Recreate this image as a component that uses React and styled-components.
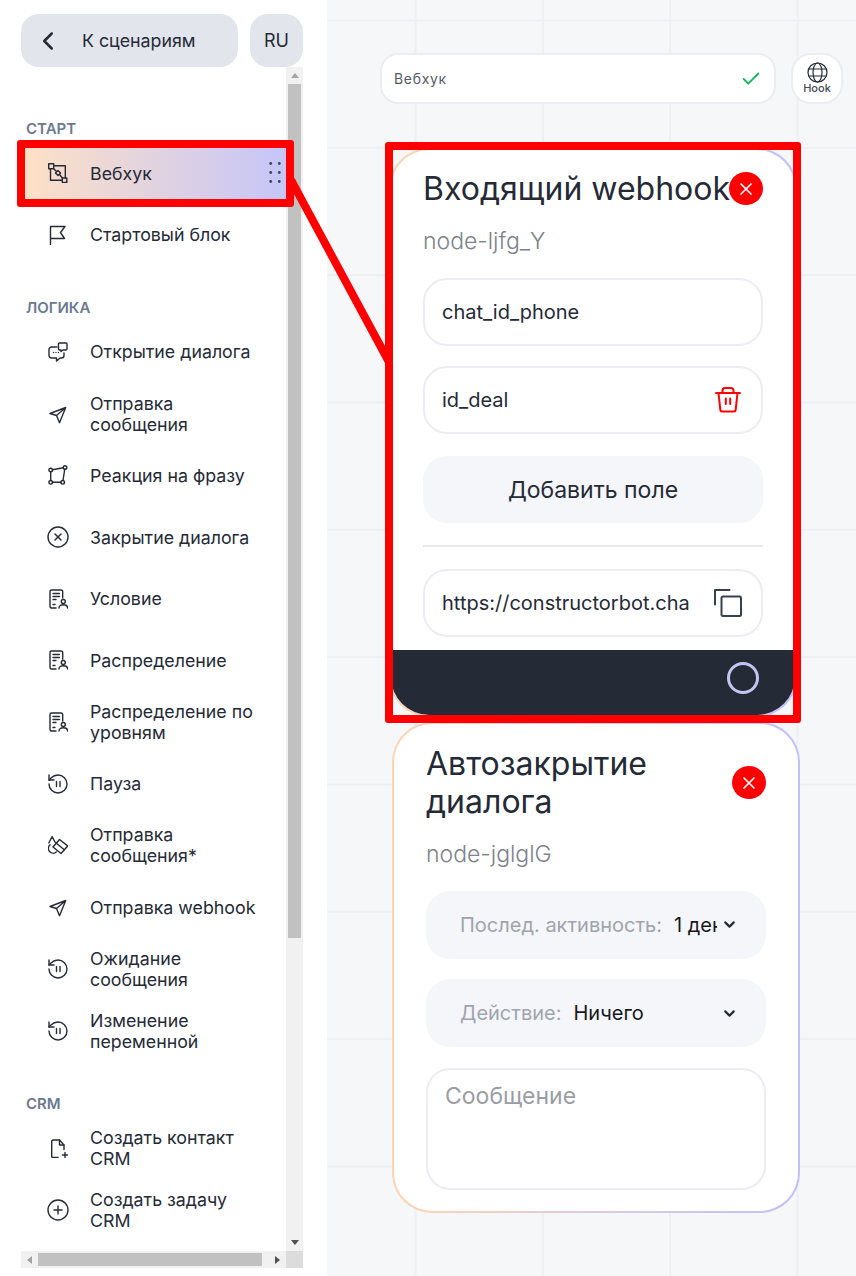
import React from "react";
import styled, { createGlobalStyle } from "styled-components";
import { ChevronLeft, ChevronDown, Check, X, CircleX, CirclePlus } from "lucide-react";

const GlobalStyle = createGlobalStyle`
  html, body {
    margin: 0;
    padding: 0;
    background: #fff;
  }
  body {
    font-family: Inter, "Noto Sans", sans-serif;
    color: #252a37;
  }
  * {
    box-sizing: border-box;
  }
`;

const Line = ({ children, size = 20, box = "0 0 20 20", width = 1.4, color = "currentColor" }) => (
  <svg width={size} height={size} viewBox={box} fill="none" stroke={color} strokeWidth={width} strokeLinecap="round" strokeLinejoin="round">
    {children}
  </svg>
);

const WebhookIcon = () => (
  <Line>
    <rect x="0.7" y="0.8" width="5" height="5" />
    <rect x="14.3" y="15" width="4.5" height="4.5" />
    <rect x="8.2" y="8.2" width="3.6" height="3.6" transform="rotate(45 10 10)" />
    <path d="M5.7 5.8 8.3 8.3M11.7 11.7l2.6 3.3M5.7 2.8H17.3V15M2.5 5.8V17.3H14.3" />
  </Line>
);
const FlagIcon = () => (
  <Line>
    <path d="M2.5 19.5V1.5H17L12.5 7.5 16.5 13.5H2.5" />
  </Line>
);
const DialogIcon = () => (
  <Line>
    <path d="M9 5H3.5A2.5 2.5 0 0 0 1 7.5v6A2.5 2.5 0 0 0 3.5 16H8.5v3l3.5-3h1.5a2.5 2.5 0 0 0 2.5-2.5V11" />
    <path d="M11.5 1H18a1 1 0 0 1 1 1v5a1 1 0 0 1-1 1h-3l-2 1.5V8h-1.500a1 1 0 0 1-1-1V2a1 1 0 0 1 1-1z" />
    <path d="M5.500 10.500h.01M8 10.500h.01M10.500 10.500h.01" />
  </Line>
);
const SendIcon = () => (
  <Line>
    <path d="M2 9.500 17.700 3.500 11.500 18.700 8.500 11.500ZM8.500 11.500 17.700 3.500" />
  </Line>
);
const ReactionIcon = () => (
  <Line>
    <circle cx="2.700" cy="5" r="1.800" />
    <circle cx="17" cy="2.500" r="1.800" />
    <circle cx="2.700" cy="17.300" r="1.800" />
    <circle cx="14.700" cy="17.300" r="1.800" />
    <path d="M4.500 4.700 15.200 2.800M2.700 6.800V15.500M4.500 17.300H12.900M16.700 4.300 15 15.500" />
  </Line>
);
const DocUserIcon = () => (
  <Line>
    <path d="M8 19H3.500A1.500 1.500 0 0 1 2 17.500V2.500A1.500 1.500 0 0 1 3.500 1H13a1.600 1.600 0 0 1 1.700 1.500V9" />
    <path d="M5 4.500H11.500M5 7.500H11.500M5 10.500H8M5 15.500H7" />
    <circle cx="15.300" cy="12.500" r="2" />
    <path d="M11 19c0-2.300 2-3.300 4.300-3.300s4.300 1 4.300 3.300" />
  </Line>
);
const PauseIcon = () => (
  <Line>
    <path d="M1 10a9 9 0 1 0 9-9 9.750 9.750 0 0 0-6.740 2.740L1 6" />
    <path d="M1 1v5h5" />
    <path d="M8.500 7.500v5M12 7.500v5" />
  </Line>
);
const ShapesIcon = () => (
  <Line>
    <path d="M.8 8 4 1.700 7.300 7.500" />
    <path d="M11.500 4.500 19.700 11 13 18.500 5 12Z" />
    <path d="M8.300 8.300 16.300 14.800" />
    <path d="M2 9.800a4.700 4.700 0 0 0 6.300 7.200" />
  </Line>
);
const FilePlusIcon = () => (
  <Line>
    <path d="M10 19.500H5a1.300 1.300 0 0 1-1.300-1.300V3.300A1.300 1.300 0 0 1 5 2h6.500L16 7v4.500" />
    <path d="M11.500 2v5H16" />
    <path d="M17 14.500v5M14.500 17h5" />
  </Line>
);
const GripIcon = () => (
  <svg width="12" height="21" viewBox="0 0 12 21" fill="#3f4452">
    <circle cx="1.700" cy="1.500" r="1.400" />
    <circle cx="10.300" cy="1.500" r="1.400" />
    <circle cx="1.700" cy="10.500" r="1.400" />
    <circle cx="10.300" cy="10.500" r="1.400" />
    <circle cx="1.700" cy="19.500" r="1.400" />
    <circle cx="10.300" cy="19.500" r="1.400" />
  </svg>
);
const GlobeIcon = () => (
  <Line size={21} box="0 0 21 21" width={1.2}>
    <circle cx="10.500" cy="10.500" r="9.500" />
    <ellipse cx="10.500" cy="10.500" rx="4.500" ry="9.500" />
    <path d="M1.800 7H19.200M1.800 14H19.200" />
  </Line>
);
const TrashIcon = () => (
  <TrashWrap>
    <Line size={26} box="0 0 26 26" width={2} color="#ff0000">
      <path d="M1 6H25M3.500 6 5.300 22.500A2 2 0 0 0 7.300 24.500H18.700a2 2 0 0 0 2-2L22.500 6" />
      <path d="M7.500 6V3.500A2.500 2.500 0 0 1 10 1H16a2.500 2.500 0 0 1 2.500 2.500V6" />
      <path d="M10.800 11.500V17M15.200 11.500V17" />
    </Line>
  </TrashWrap>
);
const CopyIcon = () => (
  <Line size={28} box="0 0 28 28" width={2} color="#3a3f4c">
    <rect x="7.500" y="7.500" width="19.500" height="19.500" rx="1.500" />
    <path d="M1 15.500V1H15.500" />
  </Line>
);

const GROUPS = [
  {
    title: "СТАРТ",
    items: [
      { label: "Вебхук", icon: <WebhookIcon />, active: true },
      { label: "Стартовый блок", icon: <FlagIcon /> },
    ],
  },
  {
    title: "ЛОГИКА",
    items: [
      { label: "Открытие диалога", icon: <DialogIcon /> },
      { label: "Отправка сообщения", icon: <SendIcon /> },
      { label: "Реакция на фразу", icon: <ReactionIcon /> },
      { label: "Закрытие диалога", icon: <CircleX size={24} strokeWidth={1.4} /> },
      { label: "Условие", icon: <DocUserIcon /> },
      { label: "Распределение", icon: <DocUserIcon /> },
      { label: "Распределение по уровням", icon: <DocUserIcon /> },
      { label: "Пауза", icon: <PauseIcon /> },
      { label: "Отправка сообщения*", icon: <ShapesIcon /> },
      { label: "Отправка webhook", icon: <SendIcon /> },
      { label: "Ожидание сообщения", icon: <PauseIcon /> },
      { label: "Изменение переменной", icon: <PauseIcon /> },
    ],
  },
  {
    title: "CRM",
    items: [
      { label: "Создать контакт CRM", icon: <FilePlusIcon /> },
      { label: "Создать задачу CRM", icon: <CirclePlus size={24} strokeWidth={1.4} /> },
    ],
  },
];

export default function App() {
  return (
    <Page>
      <GlobalStyle />
      <Sidebar>
        <SideHeader>
          <BackButton>
            <ChevronLeft size={30} strokeWidth={2} />
            <span>К сценариям</span>
          </BackButton>
          <LangButton>RU</LangButton>
        </SideHeader>
        <ListFrame>
          <List>
            {GROUPS.map((group) => (
              <Group key={group.title}>
                <GroupTitle>{group.title}</GroupTitle>
                <Items>
                  {group.items.map((item) => (
                    <Item key={item.label} $active={item.active}>
                      <ItemIcon>{item.icon}</ItemIcon>
                      <ItemLabel>{item.label}</ItemLabel>
                      {item.active && (
                        <Grip>
                          <GripIcon />
                        </Grip>
                      )}
                    </Item>
                  ))}
                </Items>
              </Group>
            ))}
          </List>
          <VTrack>
            <ArrowUp />
            <VThumb />
            <ArrowDown />
          </VTrack>
          <HTrack>
            <ArrowLeft />
            <HThumb />
            <ArrowRight />
          </HTrack>
          <Corner />
        </ListFrame>
      </Sidebar>

      <Canvas>
        <TopBar>
          <NameField>
            <NameText>Вебхук</NameText>
            <Check size={22} color="#16b85a" strokeWidth={2} />
          </NameField>
          <HookButton>
            <GlobeIcon />
            <HookLabel>Hook</HookLabel>
          </HookButton>
        </TopBar>

        <Node $left={62} $top={148}>
          <NodeBody>
            <NodeHead>
              <NodeTitle $nowrap>Входящий webhook</NodeTitle>
              <CloseButton>
                <X size={20} color="#fff" strokeWidth={2} />
              </CloseButton>
            </NodeHead>
            <NodeId>node-ljfg_Y</NodeId>
            <Field>
              <FieldInput readOnly value="chat_id_phone" />
            </Field>
            <Field>
              <FieldInput readOnly value="id_deal" />
              <TrashIcon />
            </Field>
            <AddButton>Добавить поле</AddButton>
            <Divider />
            <Field $tail>
              <FieldInput readOnly value="https://constructorbot.chat/webhook/node-ljfg_Y" />
              <CopyIcon />
            </Field>
          </NodeBody>
          <NodeFooter>
            <Handle />
          </NodeFooter>
        </Node>

        <Node $left={65} $top={722}>
          <NodeBody $second>
            <NodeHead>
              <NodeTitle>Автозакрытие диалога</NodeTitle>
              <CloseButton>
                <X size={20} color="#fff" strokeWidth={2} />
              </CloseButton>
            </NodeHead>
            <NodeId>node-jglglG</NodeId>
            <SelectRow>
              <SelectLabel>Послед. активность:</SelectLabel>
              <SelectValue $narrow>1 день</SelectValue>
              <SelectChevron>
                <ChevronDown size={17} strokeWidth={3} />
              </SelectChevron>
            </SelectRow>
            <SelectRow>
              <SelectLabel>Действие:</SelectLabel>
              <SelectValue>Ничего</SelectValue>
              <SelectChevron>
                <ChevronDown size={17} strokeWidth={3} />
              </SelectChevron>
            </SelectRow>
            <MessageArea placeholder="Сообщение" />
          </NodeBody>
        </Node>
      </Canvas>

      <Annotations>
        <MarkBox $x={17} $y={140} $w={277} $h={67} />
        <MarkBox $x={385} $y={142} $w={416} $h={581} />
        <MarkLine width="856" height="1276" viewBox="0 0 856 1276">
          <line x1="291" y1="180" x2="389" y2="362" stroke="#ff0000" strokeWidth="8" />
        </MarkLine>
      </Annotations>
    </Page>
  );
}

const Page = styled.div`
  position: relative;
  display: flex;
  width: 856px;
  height: 1276px;
  overflow: hidden;
`;

const Sidebar = styled.aside`
  width: 327px;
  flex: none;
  padding: 14px 24px 8px 21px;
  display: flex;
  flex-direction: column;
  background: #fff;
`;

const SideHeader = styled.div`
  display: flex;
  gap: 12px;
  height: 53px;
  flex: none;
`;

const BackButton = styled.div`
  flex: 1;
  display: flex;
  align-items: center;
  gap: 19px;
  padding-left: 12px;
  background: #e2e5ec;
  border-radius: 18px;
  font-size: 17.8px;
`;

const LangButton = styled.div`
  width: 53px;
  display: flex;
  align-items: center;
  justify-content: center;
  background: #e2e5ec;
  border-radius: 18px;
  font-size: 18px;
`;

const ListFrame = styled.div`
  flex: 1;
  min-height: 0;
  display: grid;
  grid-template-columns: 265px 17px;
  grid-template-rows: 1184px 17px;
`;

const List = styled.div`
  overflow: hidden;
  padding: 53px 0 0 4px;
  display: flex;
  flex-direction: column;
  gap: 38.3px;
`;

const Group = styled.section`
  display: flex;
  flex-direction: column;
`;

const GroupTitle = styled.h3`
  margin: 0 0 9px 1px;
  font-size: 15px;
  line-height: 18px;
  font-weight: 600;
  color: #6b7a90;
`;

const Items = styled.div`
  display: flex;
  flex-direction: column;
  gap: 9.7px;
`;

const Item = styled.div`
  height: 52px;
  flex: none;
  display: flex;
  align-items: center;
  padding-left: 23px;
  position: relative;
  background: ${(p) => (p.$active ? "linear-gradient(90deg, #fde0c6, #c5c5f9)" : "transparent")};
`;

const ItemIcon = styled.span`
  width: 20px;
  height: 20px;
  flex: none;
  display: flex;
  align-items: center;
  justify-content: center;
  margin-right: 22px;
  svg {
    flex: none;
  }
`;

const ItemLabel = styled.span`
  width: 172px;
  font-size: 17.8px;
  line-height: 21px;
`;

const Grip = styled.span`
  position: absolute;
  right: 5px;
  top: 15px;
  display: flex;
`;

const VTrack = styled.div`
  background: #f1f1f1;
  display: flex;
  flex-direction: column;
  align-items: center;
`;

const VThumb = styled.div`
  width: 13px;
  height: 854px;
  background: #c1c1c1;
`;

const HTrack = styled.div`
  background: #f1f1f1;
  display: flex;
  align-items: center;
  position: relative;
  padding-left: 17px;
`;

const HThumb = styled.div`
  width: 224px;
  height: 13px;
  background: #c1c1c1;
`;

const Corner = styled.div`
  background: #dcdcdc;
`;

const ArrowUp = styled.i`
  margin: 6px 0 6px;
  border: 4px solid transparent;
  border-top: 0;
  border-bottom: 5px solid #a3a3a3;
`;

const ArrowDown = styled.i`
  margin-top: auto;
  margin-bottom: 6px;
  border: 4px solid transparent;
  border-bottom: 0;
  border-top: 5px solid #505050;
`;

const ArrowLeft = styled.i`
  position: absolute;
  left: 6px;
  border: 4px solid transparent;
  border-left: 0;
  border-right: 5px solid #a3a3a3;
`;

const ArrowRight = styled.i`
  position: absolute;
  right: 6px;
  border: 4px solid transparent;
  border-right: 0;
  border-left: 5px solid #505050;
`;

const Canvas = styled.main`
  flex: 1;
  position: relative;
  padding: 53px 0 0 53px;
  background-color: #f6f7f9;
  background-image: linear-gradient(90deg, #eeeff4 2px, transparent 2px),
    linear-gradient(#eeeff4 2px, transparent 2px);
  background-size: 127.33px 127.33px;
  background-position: 87.5px 19.500px;
`;

const TopBar = styled.div`
  display: flex;
  gap: 15px;
`;

const NameField = styled.div`
  width: 396px;
  height: 51px;
  display: flex;
  align-items: center;
  justify-content: space-between;
  padding: 0 12px;
  background: #fff;
  border: 2px solid #ecedf2;
  border-radius: 18px;
`;

const NameText = styled.span`
  font-size: 14px;
  letter-spacing: 0.7px;
  color: #555a65;
`;

const HookButton = styled.div`
  width: 52px;
  height: 51px;
  display: flex;
  flex-direction: column;
  align-items: center;
  padding-top: 7px;
  background: #fff;
  border: 2px solid #ecedf2;
  border-radius: 20px;
`;

const HookLabel = styled.span`
  margin-top: -1px;
  font-size: 11px;
  line-height: 13px;
  font-weight: 500;
  color: #444955;
`;

const Node = styled.article`
  position: absolute;
  left: ${(p) => p.$left}px;
  top: ${(p) => p.$top}px;
  width: 408px;
  border: 2px solid transparent;
  border-radius: 40px;
  background: linear-gradient(#fff, #fff) padding-box,
    linear-gradient(90deg, #fcd5b3, #c0c0ff) border-box;
  overflow: hidden;
`;

const NodeBody = styled.div`
  padding: ${(p) => (p.$second ? "21px 32px 21px" : "20px 32px 13px")};
  display: flex;
  flex-direction: column;
`;

const NodeHead = styled.div`
  display: flex;
  align-items: center;
  justify-content: space-between;
`;

const NodeTitle = styled.h2`
  margin: 0;
  flex: 1;
  min-width: 0;
  white-space: ${(p) => (p.$nowrap ? "nowrap" : "normal")};
  font-size: 32px;
  line-height: 37.5px;
  font-weight: 400;
  color: #252a37;
`;

const CloseButton = styled.div`
  width: 34px;
  height: 33px;
  flex: none;
  display: flex;
  align-items: center;
  justify-content: center;
  border-radius: 50%;
  background: #ff0000;
`;

const NodeId = styled.div`
  margin: 19.5px 0 23px;
  font-size: 23px;
  line-height: 28px;
  font-weight: 300;
  color: #7d828c;
`;

const Field = styled.div`
  height: 68px;
  display: flex;
  align-items: center;
  gap: 25px;
  margin-bottom: ${(p) => (p.$tail ? 0 : "20px")};
  padding: 0 19px 0 17px;
  background: #fff;
  border: 2px solid #ecedf4;
  border-radius: 24px;
`;

const FieldInput = styled.input`
  flex: 1;
  min-width: 0;
  border: 0;
  outline: 0;
  padding: 0;
  background: transparent;
  font-family: Inter, sans-serif;
  font-size: 20px;
  color: #252a37;
`;

const TrashWrap = styled.span`
  display: flex;
  margin-right: 1px;
`;

const AddButton = styled.div`
  height: 67px;
  margin-top: 2px;
  display: flex;
  align-items: center;
  justify-content: center;
  background: #f5f6f9;
  border-radius: 24px;
  font-size: 23px;
`;

const Divider = styled.hr`
  width: 100%;
  height: 2px;
  margin: 22px 0 21.5px;
  border: 0;
  background: #eaebf0;
`;

const NodeFooter = styled.div`
  height: 65px;
  display: flex;
  align-items: flex-start;
  justify-content: flex-end;
  padding: 12px 36px 0 0;
  background: #252a37;
`;

const Handle = styled.span`
  width: 32px;
  height: 32px;
  border: 3px solid #c5c5f2;
  border-radius: 50%;
`;

const SelectRow = styled.div`
  height: 68px;
  flex: none;
  display: flex;
  align-items: center;
  margin-bottom: 20.5px;
  padding: 0 28px 0 34px;
  background: #f5f6f9;
  border-radius: 24px;
`;

const SelectLabel = styled.span`
  font-size: 20px;
  color: #a0a4ac;
  margin-right: 12px;
  white-space: nowrap;
`;

const SelectValue = styled.span`
  width: ${(p) => (p.$narrow ? "43px" : "auto")};
  overflow: hidden;
  white-space: nowrap;
  font-size: 20px;
  color: #16181d;
`;

const SelectChevron = styled.span`
  display: flex;
  margin-left: auto;
`;

const MessageArea = styled.textarea`
  display: block;
  width: 100%;
  height: 122px;
  padding: 12px 17px;
  resize: none;
  outline: 0;
  border: 2px solid #ecedf4;
  border-radius: 24px;
  font-family: Inter, sans-serif;
  font-size: 23px;
  &::placeholder {
    color: #9a9da4;
  }
`;

const Annotations = styled.div`
  position: absolute;
  inset: 0;
  pointer-events: none;
`;

const MarkBox = styled.div`
  position: absolute;
  left: ${(p) => p.$x}px;
  top: ${(p) => p.$y}px;
  width: ${(p) => p.$w}px;
  height: ${(p) => p.$h}px;
  border: 8px solid #ff0000;
  border-radius: 3px;
`;

const MarkLine = styled.svg`
  position: absolute;
  left: 0;
  top: 0;
`;
